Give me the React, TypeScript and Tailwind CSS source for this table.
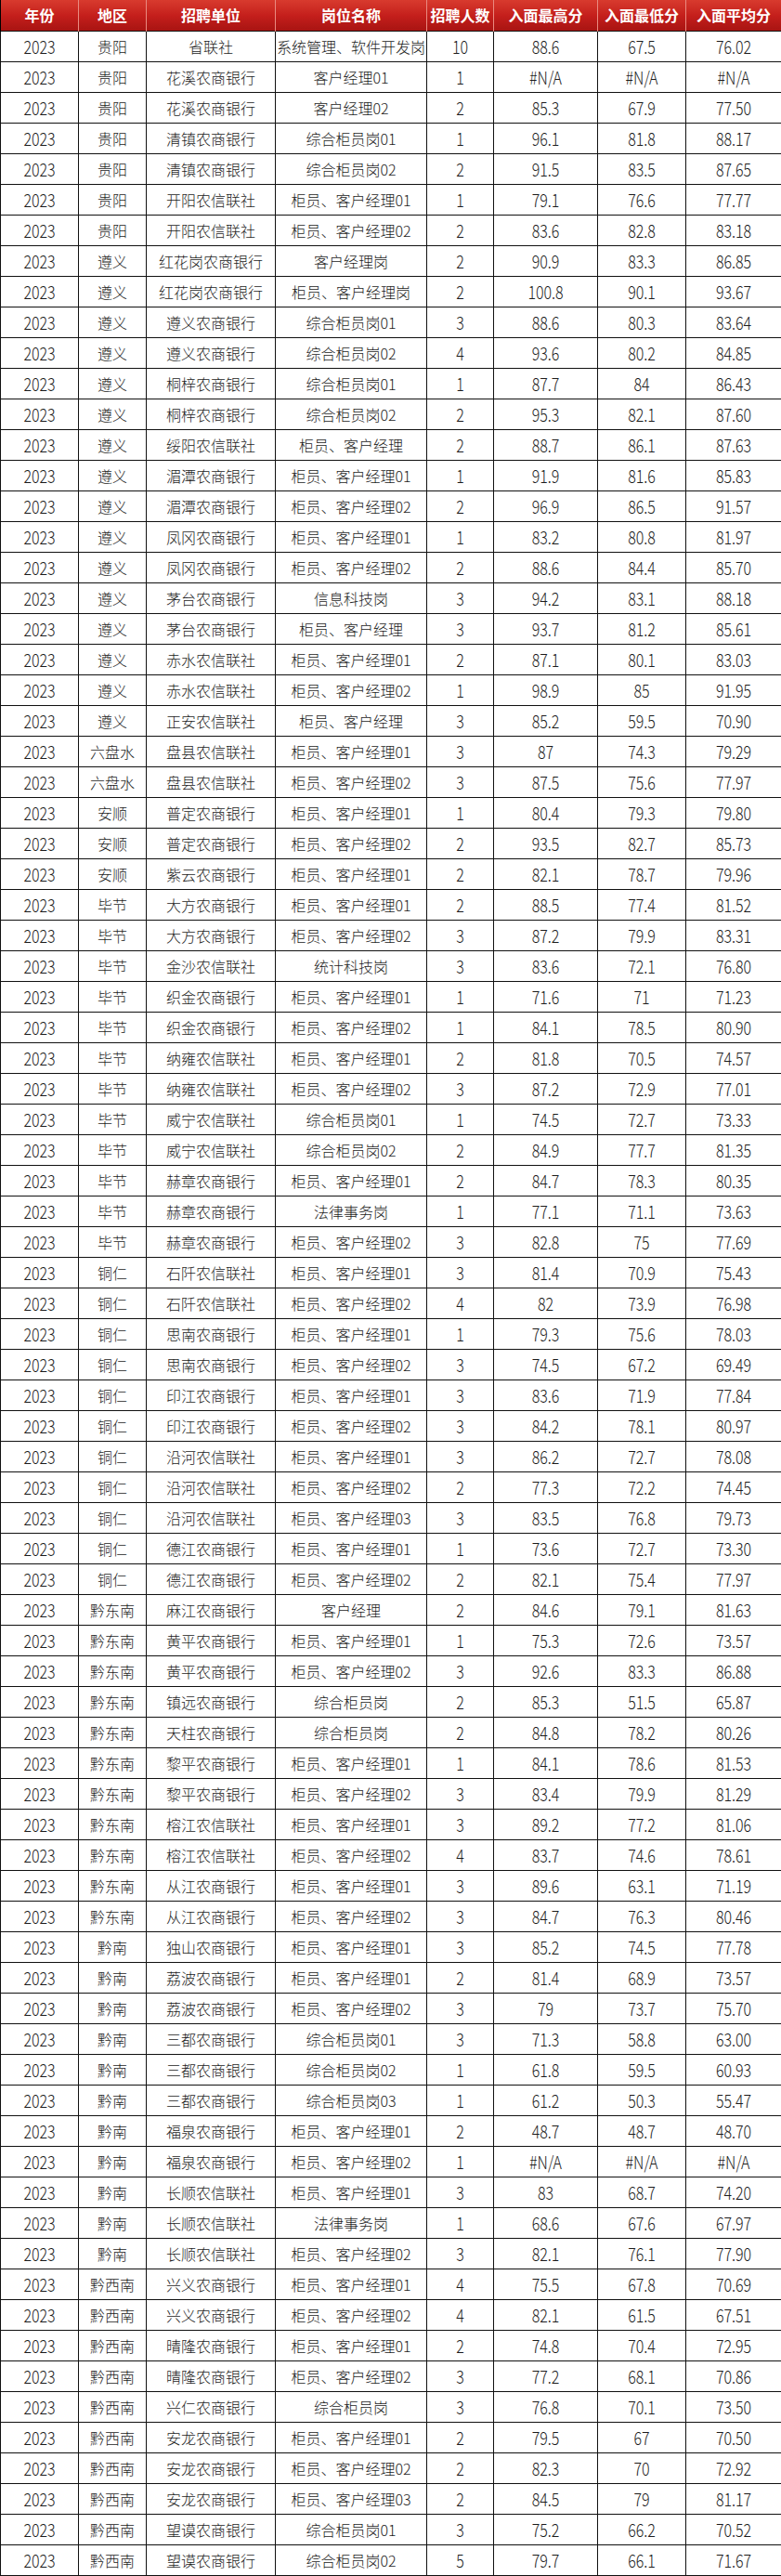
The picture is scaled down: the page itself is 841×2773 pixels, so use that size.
import React from 'react';

const raw = `贵阳,省联社,系统管理、软件开发岗,10,88.6,67.5,76.02
贵阳,花溪农商银行,客户经理01,1,#N/A,#N/A,#N/A
贵阳,花溪农商银行,客户经理02,2,85.3,67.9,77.50
贵阳,清镇农商银行,综合柜员岗01,1,96.1,81.8,88.17
贵阳,清镇农商银行,综合柜员岗02,2,91.5,83.5,87.65
贵阳,开阳农信联社,柜员、客户经理01,1,79.1,76.6,77.77
贵阳,开阳农信联社,柜员、客户经理02,2,83.6,82.8,83.18
遵义,红花岗农商银行,客户经理岗,2,90.9,83.3,86.85
遵义,红花岗农商银行,柜员、客户经理岗,2,100.8,90.1,93.67
遵义,遵义农商银行,综合柜员岗01,3,88.6,80.3,83.64
遵义,遵义农商银行,综合柜员岗02,4,93.6,80.2,84.85
遵义,桐梓农商银行,综合柜员岗01,1,87.7,84,86.43
遵义,桐梓农商银行,综合柜员岗02,2,95.3,82.1,87.60
遵义,绥阳农信联社,柜员、客户经理,2,88.7,86.1,87.63
遵义,湄潭农商银行,柜员、客户经理01,1,91.9,81.6,85.83
遵义,湄潭农商银行,柜员、客户经理02,2,96.9,86.5,91.57
遵义,凤冈农商银行,柜员、客户经理01,1,83.2,80.8,81.97
遵义,凤冈农商银行,柜员、客户经理02,2,88.6,84.4,85.70
遵义,茅台农商银行,信息科技岗,3,94.2,83.1,88.18
遵义,茅台农商银行,柜员、客户经理,3,93.7,81.2,85.61
遵义,赤水农信联社,柜员、客户经理01,2,87.1,80.1,83.03
遵义,赤水农信联社,柜员、客户经理02,1,98.9,85,91.95
遵义,正安农信联社,柜员、客户经理,3,85.2,59.5,70.90
六盘水,盘县农信联社,柜员、客户经理01,3,87,74.3,79.29
六盘水,盘县农信联社,柜员、客户经理02,3,87.5,75.6,77.97
安顺,普定农商银行,柜员、客户经理01,1,80.4,79.3,79.80
安顺,普定农商银行,柜员、客户经理02,2,93.5,82.7,85.73
安顺,紫云农商银行,柜员、客户经理01,2,82.1,78.7,79.96
毕节,大方农商银行,柜员、客户经理01,2,88.5,77.4,81.52
毕节,大方农商银行,柜员、客户经理02,3,87.2,79.9,83.31
毕节,金沙农信联社,统计科技岗,3,83.6,72.1,76.80
毕节,织金农商银行,柜员、客户经理01,1,71.6,71,71.23
毕节,织金农商银行,柜员、客户经理02,1,84.1,78.5,80.90
毕节,纳雍农信联社,柜员、客户经理01,2,81.8,70.5,74.57
毕节,纳雍农信联社,柜员、客户经理02,3,87.2,72.9,77.01
毕节,威宁农信联社,综合柜员岗01,1,74.5,72.7,73.33
毕节,威宁农信联社,综合柜员岗02,2,84.9,77.7,81.35
毕节,赫章农商银行,柜员、客户经理01,2,84.7,78.3,80.35
毕节,赫章农商银行,法律事务岗,1,77.1,71.1,73.63
毕节,赫章农商银行,柜员、客户经理02,3,82.8,75,77.69
铜仁,石阡农信联社,柜员、客户经理01,3,81.4,70.9,75.43
铜仁,石阡农信联社,柜员、客户经理02,4,82,73.9,76.98
铜仁,思南农商银行,柜员、客户经理01,1,79.3,75.6,78.03
铜仁,思南农商银行,柜员、客户经理02,3,74.5,67.2,69.49
铜仁,印江农商银行,柜员、客户经理01,3,83.6,71.9,77.84
铜仁,印江农商银行,柜员、客户经理02,3,84.2,78.1,80.97
铜仁,沿河农信联社,柜员、客户经理01,3,86.2,72.7,78.08
铜仁,沿河农信联社,柜员、客户经理02,2,77.3,72.2,74.45
铜仁,沿河农信联社,柜员、客户经理03,3,83.5,76.8,79.73
铜仁,德江农商银行,柜员、客户经理01,1,73.6,72.7,73.30
铜仁,德江农商银行,柜员、客户经理02,2,82.1,75.4,77.97
黔东南,麻江农商银行,客户经理,2,84.6,79.1,81.63
黔东南,黄平农商银行,柜员、客户经理01,1,75.3,72.6,73.57
黔东南,黄平农商银行,柜员、客户经理02,3,92.6,83.3,86.88
黔东南,镇远农商银行,综合柜员岗,2,85.3,51.5,65.87
黔东南,天柱农商银行,综合柜员岗,2,84.8,78.2,80.26
黔东南,黎平农商银行,柜员、客户经理01,1,84.1,78.6,81.53
黔东南,黎平农商银行,柜员、客户经理02,3,83.4,79.9,81.29
黔东南,榕江农信联社,柜员、客户经理01,3,89.2,77.2,81.06
黔东南,榕江农信联社,柜员、客户经理02,4,83.7,74.6,78.61
黔东南,从江农商银行,柜员、客户经理01,3,89.6,63.1,71.19
黔东南,从江农商银行,柜员、客户经理02,3,84.7,76.3,80.46
黔南,独山农商银行,柜员、客户经理01,3,85.2,74.5,77.78
黔南,荔波农商银行,柜员、客户经理01,2,81.4,68.9,73.57
黔南,荔波农商银行,柜员、客户经理02,3,79,73.7,75.70
黔南,三都农商银行,综合柜员岗01,3,71.3,58.8,63.00
黔南,三都农商银行,综合柜员岗02,1,61.8,59.5,60.93
黔南,三都农商银行,综合柜员岗03,1,61.2,50.3,55.47
黔南,福泉农商银行,柜员、客户经理01,2,48.7,48.7,48.70
黔南,福泉农商银行,柜员、客户经理02,1,#N/A,#N/A,#N/A
黔南,长顺农信联社,柜员、客户经理01,3,83,68.7,74.20
黔南,长顺农信联社,法律事务岗,1,68.6,67.6,67.97
黔南,长顺农信联社,柜员、客户经理02,3,82.1,76.1,77.90
黔西南,兴义农商银行,柜员、客户经理01,4,75.5,67.8,70.69
黔西南,兴义农商银行,柜员、客户经理02,4,82.1,61.5,67.51
黔西南,晴隆农商银行,柜员、客户经理01,2,74.8,70.4,72.95
黔西南,晴隆农商银行,柜员、客户经理02,3,77.2,68.1,70.86
黔西南,兴仁农商银行,综合柜员岗,3,76.8,70.1,73.50
黔西南,安龙农商银行,柜员、客户经理01,2,79.5,67,70.50
黔西南,安龙农商银行,柜员、客户经理02,2,82.3,70,72.92
黔西南,安龙农商银行,柜员、客户经理03,2,84.5,79,81.17
黔西南,望谟农商银行,综合柜员岗01,3,75.2,66.2,70.52
黔西南,望谟农商银行,综合柜员岗02,5,79.7,66.1,71.67`;

const rows = raw.split('\n').map((line) => ['2023', ...line.split(',')]);

const headers = ['年份', '地区', '招聘单位', '岗位名称', '招聘人数', '入面最高分', '入面最低分', '入面平均分'];
const widths = [84, 73, 139, 163, 72, 112, 95, 103];
// columns holding only digits get the tall, narrow look of the source font
const numeric = [true, false, false, false, true, true, true, true];

export default function App() {
  return (
    <div className="w-[841px] bg-white" style={{ fontFamily: '"Noto Sans CJK SC", "Noto Sans", sans-serif' }}>
      <table className="w-[841px] table-fixed border-collapse">
        <colgroup>
          {widths.map((w, i) => (
            <col key={i} style={{ width: w }} />
          ))}
        </colgroup>
        <thead>
          <tr className="h-[33px] bg-gradient-to-b from-[#d83a2e] via-[#c51f1c] to-[#a81412]">
            {headers.map((h) => (
              <th
                key={h}
                className="border-x border-[#e98a80] p-0 text-center text-[16px] font-bold leading-none whitespace-nowrap text-white first:border-l-black last:border-r-black"
              >
                {h}
              </th>
            ))}
          </tr>
        </thead>
        <tbody>
          {rows.map((r, i) => (
            <tr key={i} className="h-[33px]">
              {r.map((c, j) => (
                <td
                  key={j}
                  className="border border-[#111] p-0 text-center text-[16px] font-light leading-none whitespace-nowrap text-[#1c1c1c]"
                >
                  {numeric[j] ? <span className="inline-block scale-y-[1.2]">{c}</span> : c}
                </td>
              ))}
            </tr>
          ))}
        </tbody>
      </table>
    </div>
  );
}
